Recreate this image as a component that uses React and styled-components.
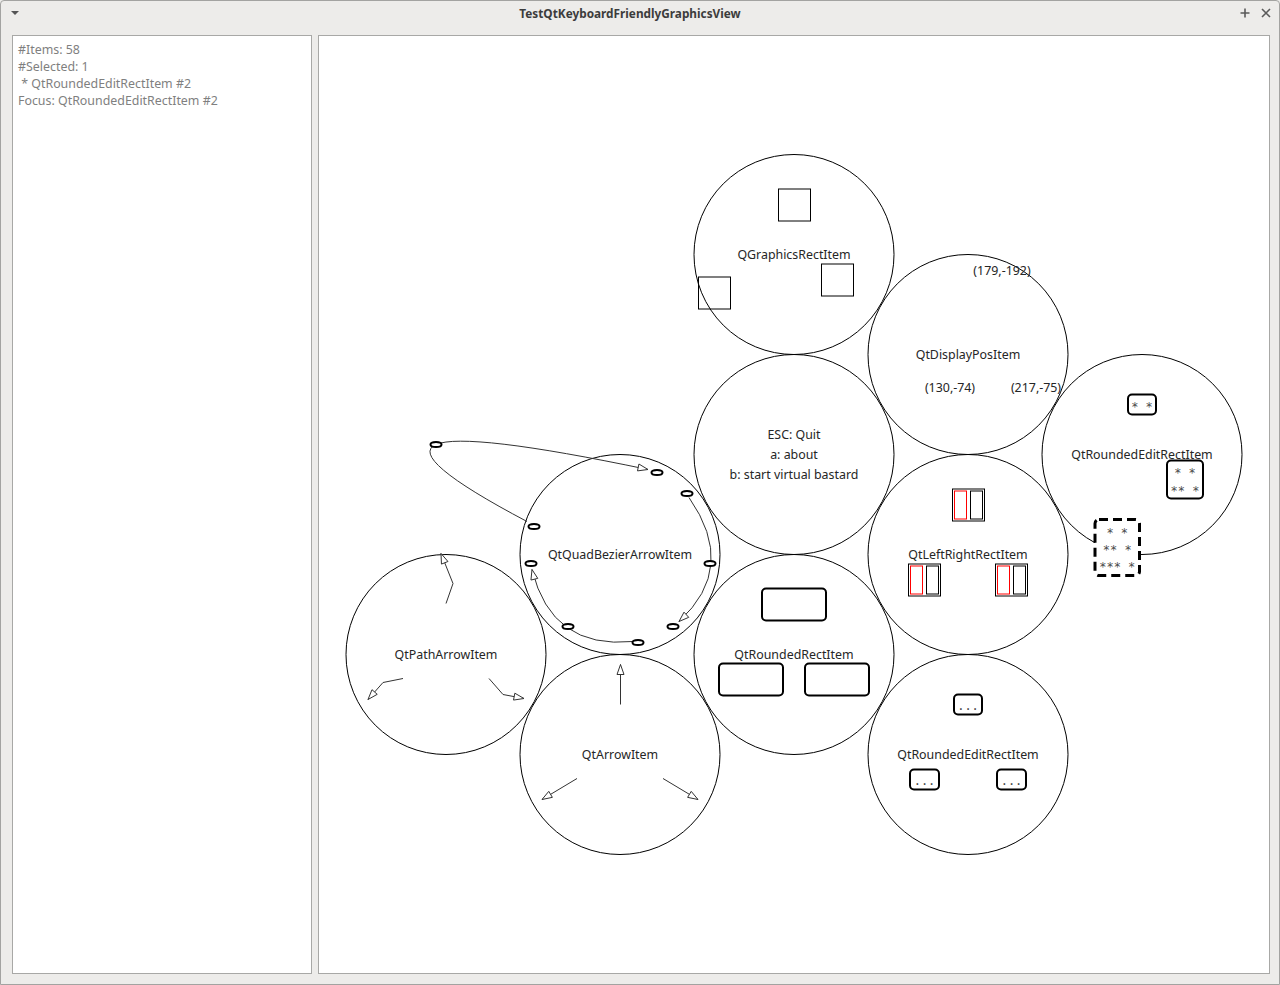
import React from 'react'
import styled, { createGlobalStyle } from 'styled-components'

const GlobalStyle = createGlobalStyle`
  html, body {
    margin: 0;
    padding: 0;
    background: #edecea;
  }
  body {
    font-family: "Noto Sans", "Open Sans", sans-serif;
  }
`

const Window = styled.div`
  width: 1280px;
  height: 985px;
  box-sizing: border-box;
  border: 1px solid #a3a3a1;
  border-radius: 4px 4px 0 0;
  background: #edecea;
  display: flex;
  flex-direction: column;
  overflow: hidden;
`

const TitleBar = styled.div`
  height: 26px;
  box-sizing: border-box;
  padding-bottom: 2px;
  display: flex;
  align-items: center;
  flex-shrink: 0;
`

const MenuButton = styled.div`
  width: 28px;
  display: flex;
  justify-content: center;
  align-items: center;
`

const Title = styled.div`
  flex: 1;
  padding-right: 6px;
  text-align: center;
  font: bold 11.8px "Noto Sans", sans-serif;
  color: #3c3c3c;
`

const Controls = styled.div`
  display: flex;
  gap: 5px;
  padding-right: 5px;
`

const ControlButton = styled.div`
  width: 16px;
  height: 16px;
  display: flex;
  justify-content: center;
  align-items: center;
`

const Body = styled.div`
  flex: 1;
  min-height: 0;
  display: flex;
  gap: 6px;
  padding: 8px 9px 10px 11px;
`

const InfoPanel = styled.div`
  width: 300px;
  box-sizing: border-box;
  border: 1px solid #a8a8a6;
  background: #fff;
  padding: 5px 5px;
  font: 12.4px "Noto Sans", sans-serif;
  line-height: 17px;
  color: #7f7f7f;
  white-space: pre;
`

const Canvas = styled.div`
  flex: 1;
  box-sizing: border-box;
  border: 1px solid #a8a8a6;
  background: #fff;
  display: flex;
`

const Scene = styled.svg`
  display: block;
  width: 100%;
  height: 100%;
`

const Ring = styled.circle`
  fill: none;
  stroke: #000;
  stroke-width: 1;
`

const Label = styled.text`
  font: 12.4px "Noto Sans", sans-serif;
  fill: #262626;
  text-anchor: middle;
  dominant-baseline: central;
`

const Square = styled.rect`
  fill: none;
  stroke: #000;
  stroke-width: 1;
`

const HalfRect = styled.rect`
  fill: none;
  stroke: ${p => (p.$red ? '#ff0000' : '#000')};
  stroke-width: 1;
`

const RoundBox = styled.rect`
  fill: #fff;
  stroke: #000;
  stroke-width: ${p => (p.$dashed ? 3 : 2)};
  stroke-dasharray: ${p => (p.$dashed ? '9 5' : 'none')};
`

const BoxText = styled.text`
  font: 12px "DejaVu Sans Mono", "Liberation Mono", monospace;
  fill: #4a4a4a;
  text-anchor: middle;
  white-space: pre;
`

const Wire = styled.path`
  fill: none;
  stroke: #333;
  stroke-width: 1;
`

const Head = styled.polygon`
  fill: #fff;
  stroke: #333;
  stroke-width: 1;
`

const Knob = styled.ellipse`
  fill: #fff;
  stroke: #000;
  stroke-width: 2;
`

const nodes = [
  { x: 794, y: 254, label: 'QGraphicsRectItem' },
  { x: 968, y: 354, label: 'QtDisplayPosItem' },
  { x: 1142, y: 454, label: 'QtRoundedEditRectItem' },
  { x: 794, y: 454, lines: ['ESC: Quit', 'a: about', 'b: start virtual bastard'] },
  { x: 968, y: 554, label: 'QtLeftRightRectItem' },
  { x: 620, y: 554, label: 'QtQuadBezierArrowItem' },
  { x: 794, y: 654, label: 'QtRoundedRectItem' },
  { x: 968, y: 754, label: 'QtRoundedEditRectItem' },
  { x: 446, y: 654, label: 'QtPathArrowItem' },
  { x: 620, y: 754, label: 'QtArrowItem' },
]

const head = (tx, ty, fx, fy, len = 10, w = 3.5) => {
  const d = Math.hypot(tx - fx, ty - fy)
  const ux = (tx - fx) / d
  const uy = (ty - fy) / d
  const bx = tx - ux * len
  const by = ty - uy * len
  return `${tx},${ty} ${bx - uy * w},${by + ux * w} ${bx + uy * w},${by - ux * w}`
}

// quad bezier that passes through p at t = 0.5
const quad = (s, p, t) => {
  const c = [2 * p[0] - (s[0] + t[0]) / 2, 2 * p[1] - (s[1] + t[1]) / 2]
  return { d: `M${s[0]},${s[1]} Q${c[0]},${c[1]} ${t[0]},${t[1]}`, c, t }
}

const curves = [
  quad([527, 521], [436, 444], [648, 469]),
  quad([689, 497], [711, 563], [679, 621]),
  quad([633, 641], [567, 627], [532, 569]),
]

const knobs = [
  [436, 444], [657, 472], [687, 493], [534, 526], [531, 563],
  [710, 563], [673, 626], [568, 626], [638, 642],
]

const pathArrows = [
  [[446, 603], [453, 583], [441, 553]],
  [[403, 678], [383, 682], [368, 699]],
  [[489, 678], [503, 694], [524, 698]],
]

const straightArrows = [
  [[620.5, 704], [620.5, 664]],
  [[577, 778], [542, 799]],
  [[663, 778], [698, 799]],
]

const EditBox = ({ x, y, w, h, lines, rows, dashed }) => (
  <g>
    <RoundBox x={x} y={y} width={w} height={h} rx={4} $dashed={dashed} />
    {lines.map((t, i) => (
      <BoxText key={i} x={x + w / 2} y={rows[i]}>{t}</BoxText>
    ))}
  </g>
)

const LeftRight = ({ x, y }) => (
  <g>
    <HalfRect x={x + 0.5} y={y + 0.5} width={32} height={32} />
    <HalfRect $red x={x + 2.5} y={y + 2.5} width={12} height={28} />
    <HalfRect x={x + 18.5} y={y + 2.5} width={12} height={28} />
  </g>
)

const App = () => (
  <>
    <GlobalStyle />
    <Window>
      <TitleBar>
        <MenuButton>
          <svg width="8" height="5" viewBox="0 0 8 5">
            <polygon points="0,0 8,0 4,4" fill="#555" />
          </svg>
        </MenuButton>
        <Title>TestQtKeyboardFriendlyGraphicsView</Title>
        <Controls>
          <ControlButton>
            <svg width="10" height="10" viewBox="0 0 10 10">
              <path d="M5 0.5V9.5M0.5 5H9.5" stroke="#5a5a5a" strokeWidth="1.6" />
            </svg>
          </ControlButton>
          <ControlButton>
            <svg width="10" height="10" viewBox="0 0 10 10">
              <path d="M1 1L9 9M9 1L1 9" stroke="#5a5a5a" strokeWidth="1.6" />
            </svg>
          </ControlButton>
        </Controls>
      </TitleBar>
      <Body>
        <InfoPanel>
          {'#Items: 58\n#Selected: 1\n * QtRoundedEditRectItem #2\nFocus: QtRoundedEditRectItem #2'}
        </InfoPanel>
        <Canvas>
          <Scene viewBox="319 36 950 936">
            {nodes.map(n => (
              <Ring key={n.x + '-' + n.y} cx={n.x} cy={n.y} r={100} />
            ))}
            {nodes.map(n =>
              n.lines ? (
                n.lines.map((t, i) => (
                  <Label key={t} x={n.x} y={n.y - 20 + i * 20}>{t}</Label>
                ))
              ) : (
                <Label key={n.label + n.y} x={n.x} y={n.y}>{n.label}</Label>
              )
            )}

            {/* QGraphicsRectItem */}
            <Square x={778.5} y={188.5} width={32} height={32} />
            <Square x={821.5} y={263.5} width={32} height={32} />
            <Square x={698.5} y={276.5} width={32} height={32} />

            {/* QtDisplayPosItem */}
            <Label x={1002} y={270}>(179,-192)</Label>
            <Label x={950} y={387}>(130,-74)</Label>
            <Label x={1036} y={387}>(217,-75)</Label>

            {/* QtLeftRightRectItem */}
            <LeftRight x={952} y={488} />
            <LeftRight x={908} y={563} />
            <LeftRight x={995} y={563} />

            {/* QtRoundedRectItem */}
            <RoundBox x={762} y={588} width={64} height={32} rx={4} />
            <RoundBox x={719} y={663} width={64} height={32} rx={4} />
            <RoundBox x={805} y={663} width={64} height={32} rx={4} />

            {/* QtRoundedEditRectItem, bottom */}
            <EditBox x={954} y={694} w={28} h={20} lines={['...']} rows={[709]} />
            <EditBox x={910} y={769} w={29} h={20} lines={['...']} rows={[784]} />
            <EditBox x={997} y={769} w={29} h={20} lines={['...']} rows={[784]} />

            {/* QtRoundedEditRectItem, right */}
            <EditBox x={1128} y={394} w={28} h={20} lines={['* *']} rows={[410]} />
            <EditBox x={1167} y={460} w={36} h={38} lines={['* *', '** *']} rows={[476, 494]} />
            <EditBox
              x={1095}
              y={519}
              w={44.5}
              h={56}
              dashed
              lines={['* *', '** *', '*** *']}
              rows={[536, 553, 570]}
            />

            {/* QtQuadBezierArrowItem */}
            {curves.map((c, i) => (
              <g key={i}>
                <Wire d={c.d} />
                <Head points={head(c.t[0], c.t[1], c.c[0], c.c[1])} />
              </g>
            ))}
            {knobs.map(([x, y]) => (
              <Knob key={x + '-' + y} cx={x} cy={y} rx={5.5} ry={2.5} />
            ))}

            {/* QtPathArrowItem */}
            {pathArrows.map((pts, i) => {
              const [a, b, t] = pts
              return (
                <g key={i}>
                  <Wire d={`M${a[0]},${a[1]} L${b[0]},${b[1]} L${t[0]},${t[1]}`} />
                  <Head points={head(t[0], t[1], b[0], b[1])} />
                </g>
              )
            })}

            {/* QtArrowItem */}
            {straightArrows.map(([a, t], i) => (
              <g key={i}>
                <Wire d={`M${a[0]},${a[1]} L${t[0]},${t[1]}`} />
                <Head points={head(t[0], t[1], a[0], a[1])} />
              </g>
            ))}
          </Scene>
        </Canvas>
      </Body>
    </Window>
  </>
)

export default App
